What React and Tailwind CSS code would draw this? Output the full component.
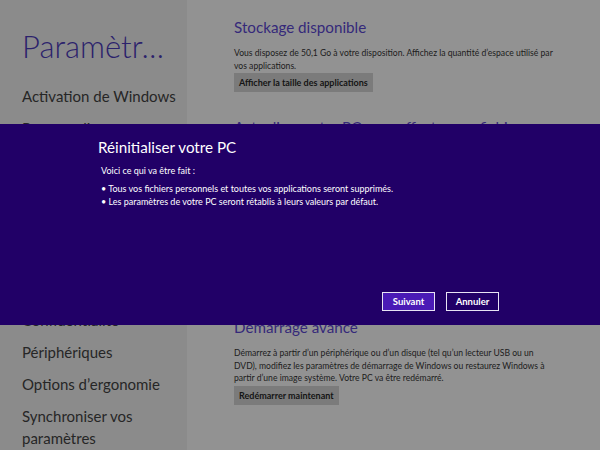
import React from 'react';

const MENU = [
  ['Activation de Windows'],
  ['Personnaliser'],
  ['Utilisateurs'],
  ['Notifications'],
  ['Rechercher'],
  ['Partager'],
  ['Général'],
  ['Confidentialité'],
  ['Périphériques'],
  ["Options d’ergonomie"],
  ['Synchroniser vos', 'paramètres'],
];

const SECTIONS = [
  {
    title: 'Stockage disponible',
    lines: ["Vous disposez de 50,1 Go à votre disposition. Affichez la quantité d’espace utilisé par", 'vos applications.'],
    button: 'Afficher la taille des applications',
  },
  {
    title: 'Actualiser votre PC sans affecter vos fichiers',
    lines: ['Si votre PC ne fonctionne pas correctement, vous pouvez l’actualiser sans perdre vos', 'photos, votre musique, vos vidéos et autres fichiers personnels.'],
    button: 'Commencer',
  },
  {
    title: 'Tout supprimer et réinstaller Windows',
    lines: ['Si vous voulez recycler votre PC ou recommencer à zéro, vous pouvez le réinitialiser', 'complètement à ses paramètres par défaut.'],
    button: 'Commencer',
  },
  {
    title: 'Démarrage avancé',
    lines: [
      "Démarrez à partir d’un périphérique ou d’un disque (tel qu’un lecteur USB ou un",
      'DVD), modifiez les paramètres de démarrage de Windows ou restaurez Windows à',
      "partir d’une image système. Votre PC va être redémarré.",
    ],
    button: 'Redémarrer maintenant',
  },
];

const font = { fontFamily: 'Lato, "Noto Sans", sans-serif' };

export default function App() {
  return (
    <div className="relative w-[600px] h-[450px] overflow-hidden" style={font}>
      {/* dimmed settings page */}
      <div className="flex h-full">
        <div className="w-[187px] shrink-0 bg-[#8b8b8b] pl-[22px] pt-[22px]">
          <div className="text-[31px] leading-[48px] text-[#2b226c] font-light whitespace-nowrap">Paramètr…</div>
          <div className="mt-[10px] flex flex-col">
            {MENU.map((m, i) => (
              <div key={i} className="text-[15px] leading-[22px] text-[#262626] py-[5px] whitespace-nowrap">
                {m.map((l, j) => <div key={j}>{l}</div>)}
              </div>
            ))}
          </div>
        </div>
        <div className="flex-1 bg-[#929292] pl-[47px] pt-[15px]">
          {SECTIONS.map((s, i) => (
            <div key={i} className="mb-[23px]">
              <div className="text-[15.2px] leading-[24px] text-[#35297a] whitespace-nowrap">{s.title}</div>
              <div className="mt-[8px] text-[8.6px] leading-[12.5px] text-[#1c1c1c]">
                {s.lines.map((l, j) => <div key={j} className="whitespace-nowrap">{l}</div>)}
              </div>
              <div className="mt-[1px] w-fit bg-[#7b7b7b] px-[5px] h-[19px] leading-[19px] text-[9px] font-bold text-[#141414]">{s.button}</div>
            </div>
          ))}
        </div>
      </div>

      {/* reset dialog band */}
      <div className="absolute left-0 right-0 top-[124px] h-[201px] bg-[#210067] pl-[98px] pt-[10px]">
        <div className="text-[15.2px] leading-[26px] text-white">Réinitialiser votre PC</div>
        <div className="pl-[3px] text-[9px] leading-[13.5px] text-white">
          <div className="mt-[4px]">Voici ce qui va être fait :</div>
          <div className="mt-[4px]">• Tous vos fichiers personnels et toutes vos applications seront supprimés.</div>
          <div>• Les paramètres de votre PC seront rétablis à leurs valeurs par défaut.</div>
        </div>
        <div className="absolute right-[101px] top-[168px] flex gap-[11px]">
          <button className="w-[53px] h-[19px] border-[1.5px] border-[#e8e4f4] bg-[#4a1ab6] text-[9.5px] font-bold text-white leading-none">Suivant</button>
          <button className="w-[53px] h-[19px] border-[1.5px] border-[#e8e4f4] bg-[#210067] text-[9.5px] font-bold text-white leading-none">Annuler</button>
        </div>
      </div>
    </div>
  );
}
